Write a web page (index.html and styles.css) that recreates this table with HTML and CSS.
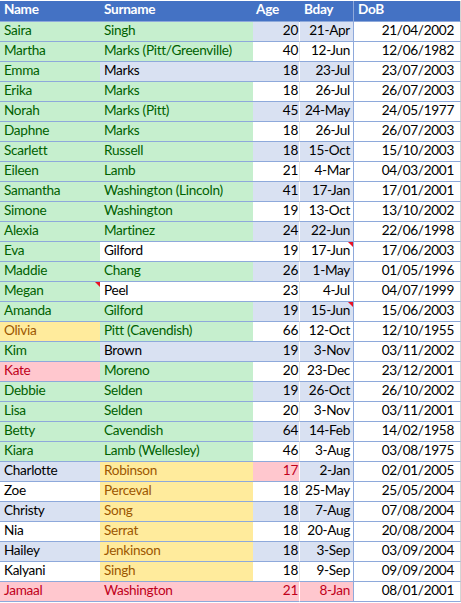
FILE: index.html
```html
<!DOCTYPE html>
<html>
<head>
<meta charset="utf-8">
<link rel="stylesheet" href="styles.css">
</head>
<body>
<div class="sheet">
  <div class="topline"></div>
  <div class="row head">
    <div class="c n">Name</div><div class="c s">Surname</div><div class="c a">Age</div><div class="c bd">Bday</div><div class="c dob">DoB</div>
  </div>
  <div class="row"><div class="c n g">Saira</div><div class="c s g">Singh</div><div class="c a b num">20</div><div class="c bd b num">21-Apr</div><div class="c dob num">21/04/2002</div></div>
  <div class="row"><div class="c n g">Martha</div><div class="c s g">Marks (Pitt/Greenville)</div><div class="c a w num">40</div><div class="c bd w num">12-Jun</div><div class="c dob num">12/06/1982</div></div>
  <div class="row"><div class="c n g">Emma</div><div class="c s b">Marks</div><div class="c a b num">18</div><div class="c bd b num">23-Jul</div><div class="c dob num">23/07/2003</div></div>
  <div class="row"><div class="c n g">Erika</div><div class="c s g">Marks</div><div class="c a w num">18</div><div class="c bd w num">26-Jul</div><div class="c dob num">26/07/2003</div></div>
  <div class="row"><div class="c n g">Norah</div><div class="c s g">Marks (Pitt)</div><div class="c a b num">45</div><div class="c bd b num">24-May</div><div class="c dob num">24/05/1977</div></div>
  <div class="row"><div class="c n g">Daphne</div><div class="c s g">Marks</div><div class="c a w num">18</div><div class="c bd w num">26-Jul</div><div class="c dob num">26/07/2003</div></div>
  <div class="row"><div class="c n g">Scarlett</div><div class="c s g">Russell</div><div class="c a b num">18</div><div class="c bd b num">15-Oct</div><div class="c dob num">15/10/2003</div></div>
  <div class="row"><div class="c n g">Eileen</div><div class="c s g">Lamb</div><div class="c a w num">21</div><div class="c bd w num">4-Mar</div><div class="c dob num">04/03/2001</div></div>
  <div class="row"><div class="c n g">Samantha</div><div class="c s g">Washington (Lincoln)</div><div class="c a b num">41</div><div class="c bd b num">17-Jan</div><div class="c dob num">17/01/2001</div></div>
  <div class="row"><div class="c n g">Simone</div><div class="c s g">Washington</div><div class="c a w num">19</div><div class="c bd w num">13-Oct</div><div class="c dob num">13/10/2002</div></div>
  <div class="row"><div class="c n g">Alexia</div><div class="c s g">Martinez</div><div class="c a b num">24</div><div class="c bd b num">22-Jun</div><div class="c dob num">22/06/1998</div></div>
  <div class="row"><div class="c n g">Eva</div><div class="c s w">Gilford</div><div class="c a w num">19</div><div class="c bd w num note">17-Jun</div><div class="c dob num">17/06/2003</div></div>
  <div class="row"><div class="c n g">Maddie</div><div class="c s g">Chang</div><div class="c a b num">26</div><div class="c bd b num">1-May</div><div class="c dob num">01/05/1996</div></div>
  <div class="row"><div class="c n g note">Megan</div><div class="c s w">Peel</div><div class="c a w num">23</div><div class="c bd w num">4-Jul</div><div class="c dob num">04/07/1999</div></div>
  <div class="row"><div class="c n g">Amanda</div><div class="c s g">Gilford</div><div class="c a b num">19</div><div class="c bd b num note">15-Jun</div><div class="c dob num">15/06/2003</div></div>
  <div class="row"><div class="c n y">Olivia</div><div class="c s g">Pitt (Cavendish)</div><div class="c a w num">66</div><div class="c bd w num">12-Oct</div><div class="c dob num">12/10/1955</div></div>
  <div class="row"><div class="c n g">Kim</div><div class="c s b">Brown</div><div class="c a b num">19</div><div class="c bd b num">3-Nov</div><div class="c dob num">03/11/2002</div></div>
  <div class="row"><div class="c n r">Kate</div><div class="c s g">Moreno</div><div class="c a w num">20</div><div class="c bd w num">23-Dec</div><div class="c dob num">23/12/2001</div></div>
  <div class="row"><div class="c n g">Debbie</div><div class="c s g">Selden</div><div class="c a b num">19</div><div class="c bd b num">26-Oct</div><div class="c dob num">26/10/2002</div></div>
  <div class="row"><div class="c n g">Lisa</div><div class="c s g">Selden</div><div class="c a w num">20</div><div class="c bd w num">3-Nov</div><div class="c dob num">03/11/2001</div></div>
  <div class="row"><div class="c n g">Betty</div><div class="c s g">Cavendish</div><div class="c a b num">64</div><div class="c bd b num">14-Feb</div><div class="c dob num">14/02/1958</div></div>
  <div class="row"><div class="c n g">Kiara</div><div class="c s g">Lamb (Wellesley)</div><div class="c a w num">46</div><div class="c bd w num">3-Aug</div><div class="c dob num">03/08/1975</div></div>
  <div class="row"><div class="c n b">Charlotte</div><div class="c s y">Robinson</div><div class="c a r num">17</div><div class="c bd b num">2-Jan</div><div class="c dob num">02/01/2005</div></div>
  <div class="row"><div class="c n w">Zoe</div><div class="c s y">Perceval</div><div class="c a w num">18</div><div class="c bd w num">25-May</div><div class="c dob num">25/05/2004</div></div>
  <div class="row"><div class="c n b">Christy</div><div class="c s y">Song</div><div class="c a b num">18</div><div class="c bd b num">7-Aug</div><div class="c dob num">07/08/2004</div></div>
  <div class="row"><div class="c n w">Nia</div><div class="c s y">Serrat</div><div class="c a w num">18</div><div class="c bd w num">20-Aug</div><div class="c dob num">20/08/2004</div></div>
  <div class="row"><div class="c n b">Hailey</div><div class="c s y">Jenkinson</div><div class="c a b num">18</div><div class="c bd b num">3-Sep</div><div class="c dob num">03/09/2004</div></div>
  <div class="row"><div class="c n w">Kalyani</div><div class="c s y">Singh</div><div class="c a w num">18</div><div class="c bd w num">9-Sep</div><div class="c dob num">09/09/2004</div></div>
  <div class="row"><div class="c n r">Jamaal</div><div class="c s r">Washington</div><div class="c a r num">21</div><div class="c bd r num">8-Jan</div><div class="c dob num">08/01/2001</div></div>
</div>
</body>
</html>
```

FILE: styles.css
```css
html, body {
  margin: 0;
  padding: 0;
  background: #ffffff;
}

.sheet {
  width: 461px;
  font-family: Lato, "Open Sans", sans-serif;
  font-size: 13.6px;
  letter-spacing: -0.3px;
  color: #000000;
}

.topline {
  height: 1px;
  background: #ffffff;
}

.row {
  display: grid;
  grid-template-columns: 100px 153px 46px 54px 108px;
  height: 20px;
}

.c {
  box-sizing: border-box;
  height: 20px;
  padding: 0 4px 2px 4px;
  display: flex;
  align-items: flex-end;
  border-bottom: 1px solid #8ea9db;
  white-space: nowrap;
  overflow: hidden;
  position: relative;
  line-height: 17px;
}

.num {
  justify-content: flex-end;
}

.a { padding-right: 1px; }
.bd { padding-right: 3px; border-left: 1px solid #ffffff; }
.dob {
  padding-right: 6px;
  border-left: 1px solid #8ea9db;
  border-right: 1px solid #d4d4d4;
  background: #ffffff;
}

.head {
  height: 21px;
}
.head .c {
  height: 21px;
  background: #4472c4;
  color: #ffffff;
  font-weight: 700;
  padding-bottom: 3px;
  border-bottom: 1px solid #8ea9db;
}
.head .bd { border-left: 1px solid #4472c4; }
.head .a { padding-left: 3px; }

.g { background: #c6efce; color: #006100; }
.y { background: #ffeb9c; color: #9c5700; }
.r { background: #ffc7ce; color: #c0001a; }
.b { background: #d9e1f2; }
.w { background: #ffffff; }
.bd.w { border-left-color: #e4e4e4; }

.note::after {
  content: "";
  position: absolute;
  top: 0;
  right: 0;
  width: 0;
  height: 0;
  border-top: 5px solid #e81123;
  border-left: 5px solid transparent;
}
```
